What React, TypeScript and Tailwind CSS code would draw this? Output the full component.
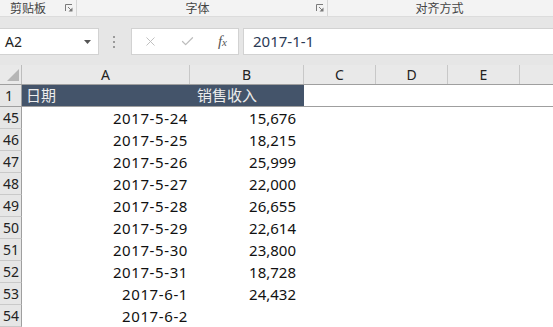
import { X, Check } from 'lucide-react';

const rows: { n: number; date: string; amount: string }[] = [
  { n: 45, date: '2017-5-24', amount: '15,676' },
  { n: 46, date: '2017-5-25', amount: '18,215' },
  { n: 47, date: '2017-5-26', amount: '25,999' },
  { n: 48, date: '2017-5-27', amount: '22,000' },
  { n: 49, date: '2017-5-28', amount: '26,655' },
  { n: 50, date: '2017-5-29', amount: '22,614' },
  { n: 51, date: '2017-5-30', amount: '23,800' },
  { n: 52, date: '2017-5-31', amount: '18,728' },
  { n: 53, date: '2017-6-1', amount: '24,432' },
  { n: 54, date: '2017-6-2', amount: '' },
];

function Launcher() {
  return (
    <svg width="8" height="8" viewBox="0 0 8 8" className="text-[#7a7a7a]">
      <path d="M0.5 7V0.5H7" fill="none" stroke="currentColor" strokeWidth="1" />
      <path d="M3 3L6.5 6.5" fill="none" stroke="currentColor" strokeWidth="1" />
      <path d="M7.5 3.5V7.5H3.5Z" fill="currentColor" />
    </svg>
  );
}

export default function App() {
  return (
    <div
      className="w-[553px] h-[327px] overflow-hidden bg-white flex flex-col"
      style={{ fontFamily: '"Noto Sans", "Noto Sans CJK SC", sans-serif' }}
    >
      {/* ribbon group labels */}
      <div className="h-[17px] flex-shrink-0 flex bg-[#f3f3f3] border-b border-[#dcdcdc] text-[12px] leading-none text-[#444]">
        <div className="w-[77px] flex items-center pl-[10px] pr-[3px] border-r border-[#d6d6d6]">
          <span className="flex-1 pt-[1px]">剪贴板</span>
          <Launcher />
        </div>
        <div className="w-[251px] flex items-center pr-[3px] border-r border-[#d6d6d6]">
          <span className="flex-1 text-center pl-[2px] pt-[1px]">字体</span>
          <Launcher />
        </div>
        <div className="flex-1 flex items-center justify-center pr-[2px]">
          <span className="pt-[1px]">对齐方式</span>
        </div>
      </div>

      {/* formula bar */}
      <div className="flex-shrink-0 bg-[#e6e6e6] pt-[11px] pb-[10px]">
        <div className="h-[27px] flex">
          <div className="w-[99px] bg-white border border-[#d2d2d2] border-l-0 flex items-center pl-[5px] pr-[7px]">
            <span className="flex-1 text-[14px] text-[#222]">A2</span>
            <svg width="7" height="4" viewBox="0 0 7 4">
              <path d="M0 0H7L3.5 4Z" fill="#555" />
            </svg>
          </div>
          <div className="w-[32px] flex flex-col items-center justify-center gap-[3px] pr-[2px]">
            <span className="w-[2px] h-[2px] bg-[#9a9a9a]" />
            <span className="w-[2px] h-[2px] bg-[#9a9a9a]" />
            <span className="w-[2px] h-[2px] bg-[#9a9a9a]" />
          </div>
          <div className="w-[108px] bg-white border border-[#d2d2d2] flex items-center justify-between pl-[11px] pr-[11px]">
            <X size={15} strokeWidth={1.5} className="text-[#bdbdbd]" />
            <Check size={15} strokeWidth={2} className="text-[#bdbdbd]" />
            <span
              className="italic text-[15px] text-[#555] leading-none"
              style={{ fontFamily: '"Liberation Serif", serif' }}
            >
              f<span className="text-[11px]">x</span>
            </span>
          </div>
          <div className="flex-1 ml-[4px] bg-white border border-[#d2d2d2] border-r-0 flex items-center pl-[9px]">
            <span className="text-[15px] text-[#2b3a55]">2017-1-1</span>
          </div>
        </div>
      </div>

      {/* column headers */}
      <div className="h-[20px] flex-shrink-0 flex bg-[#e9e9e9] border-b border-[#9f9f9f] text-[14px] text-[#222] leading-none">
        <div className="w-[22px] border-r border-[#bdbdbd] flex items-end justify-end pr-[2px] pb-[3px]">
          <svg width="12" height="12" viewBox="0 0 12 12">
            <path d="M12 0V12H0Z" fill="#b5b5b5" />
          </svg>
        </div>
        <div className="w-[168px] border-r border-[#c8c8c8] flex items-center justify-center">A</div>
        <div className="w-[114px] border-r border-[#c8c8c8] flex items-center justify-center">B</div>
        <div className="w-[72px] border-r border-[#c8c8c8] flex items-center justify-center">C</div>
        <div className="w-[72px] border-r border-[#c8c8c8] flex items-center justify-center">D</div>
        <div className="w-[72px] border-r border-[#c8c8c8] flex items-center justify-center">E</div>
        <div className="flex-1" />
      </div>

      {/* frozen header row */}
      <div className="h-[22px] flex-shrink-0 flex border-b border-[#9f9f9f] text-[15px]">
        <div className="w-[22px] bg-[#e6e6e6] border-r border-[#9f9f9f] flex items-center pl-[5px] text-[14px] text-[#222]">1</div>
        <div className="w-[282px] bg-[#44546a] flex items-center text-[#ececec]">
          <span className="w-[168px] pl-[4px]">日期</span>
          <span className="pl-[7px]">销售收入</span>
        </div>
        <div className="flex-1" />
      </div>

      {/* data rows */}
      {rows.map((r) => (
        <div key={r.n} className="h-[22px] flex-shrink-0 flex text-[15px] text-[#111]">
          <div className="w-[22px] bg-[#e6e6e6] border-r border-b border-r-[#9f9f9f] border-b-[#c9c9c9] flex items-center pl-[3px] text-[14px] text-[#222]">
            {r.n}
          </div>
          <div className="w-[168px] flex items-center justify-end pr-[2px] tracking-[0.6px]">{r.date}</div>
          <div className="w-[114px] flex items-center justify-end pr-[8px]">{r.amount}</div>
          <div className="flex-1" />
        </div>
      ))}
    </div>
  );
}
